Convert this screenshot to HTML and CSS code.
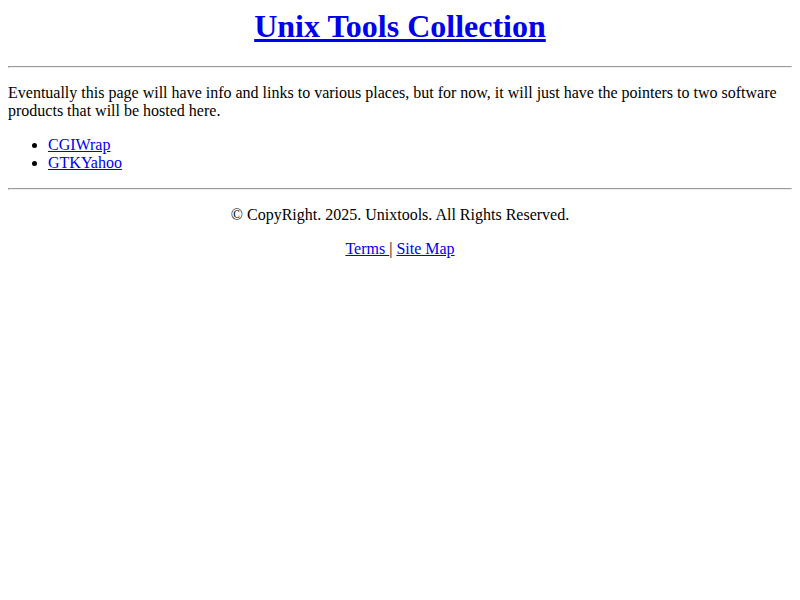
FILE: index.html
```html
<!DOCTYPE html>
<html>
<head>
<meta charset="utf-8">
<title>Unix Tools Collection</title>
<link rel="stylesheet" href="styles.css">
</head>
<body>
<h1 class="title"><a href="#">Unix Tools Collection</a></h1>
<hr>
<p>Eventually this page will have info and links to various places, but for now, it will just have the pointers to two software products that will be hosted here.</p>
<ul>
<li><a href="#">CGIWrap</a></li>
<li><a href="#">GTKYahoo</a></li>
</ul>
<hr>
<div class="footer">
<p>&copy; CopyRight. 2025. Unixtools. All Rights Reserved.</p>
<p><a href="#">Terms </a>| <a href="#">Site Map</a></p>
</div>
</body>
</html>
```
FILE: styles.css
```css
body {
  font-family: "Liberation Serif", "Times New Roman", serif;
  font-size: 16px;
  margin: 8px;
  color: #000;
  background: #fff;
}
a { color: #0000ee; }
.title {
  text-align: center;
  font-size: 32px;
  margin-top: 0;
  margin-bottom: 21.44px;
}
.footer { text-align: center; }
```
